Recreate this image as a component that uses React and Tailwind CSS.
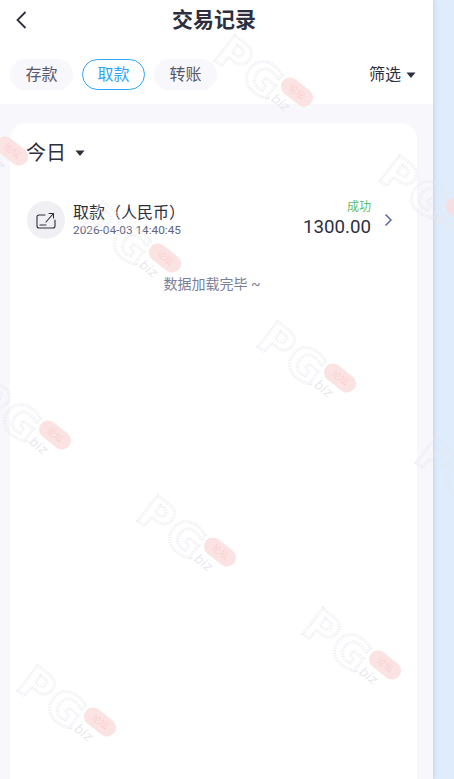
import React from 'react';

// pill centre of each watermark stamp
const marks = [
  { x: 297, y: 92 },
  { x: 12, y: 151 },
  { x: 462, y: 212 },
  { x: 165, y: 258 },
  { x: 340, y: 378 },
  { x: 55, y: 435 },
  { x: 498, y: 494 },
  { x: 220, y: 552 },
  { x: 385, y: 665 },
  { x: 100, y: 722 },
  { x: 190, y: -35 }
];

const Watermark = ({ x, y }) => (
  <svg className="absolute overflow-visible" width="1" height="1" style={{ left: x, top: y }}>
    <g transform="rotate(38)" fontFamily="'DejaVu Sans', sans-serif">
      <text
        x="-88"
        y="26"
        fontSize="44"
        fontWeight="700"
        letterSpacing="2"
        fill="none"
        stroke="#e6e8ee"
        strokeWidth="3"
        strokeDasharray="1 1.500"
        opacity="0.65"
      >
        PG
      </text>
      <rect x="-18" y="-9" width="36" height="18" rx="9" fill="#fbdcdc" opacity="0.8" />
      <text x="-9" y="3" fontSize="9" fill="#f8d0d0" fontFamily="'Noto Sans CJK SC', sans-serif">论坛</text>
      <text x="-20" y="23" fontSize="13" fill="#e8e9ee" fontStyle="italic">.biz</text>
    </g>
  </svg>
);

const Caret = ({ className }) => (
  <svg className={className} viewBox="0 0 10 6" fill="#2d2f3e">
    <path d="M0.5 0.5h9L5.4 5.4a.5.5 0 0 1-.8 0z" />
  </svg>
);

const tabs = [
  { id: 'deposit', label: '存款' },
  { id: 'withdraw', label: '取款', active: true },
  { id: 'transfer', label: '转账' }
];

export default function App() {
  return (
    <div className="relative flex h-[779px] w-[454px] overflow-hidden bg-[#deecfb] font-['Roboto','Noto_Sans_CJK_SC',sans-serif] text-[#2d2f3e]">
      <div className="flex w-[433px] flex-col bg-white shadow-[1px_0_4px_rgba(120,140,180,0.25)]">
        {/* header */}
        <div className="relative flex h-[40px] items-center justify-center pr-[5px]">
          <svg className="absolute left-[14px] top-[10px] h-[20px] w-[14px]" viewBox="0 0 14 20" fill="none" stroke="#2d2f3e" strokeWidth="1.8">
            <path d="M11.5 2 3.5 10l8 8" />
          </svg>
          <h1 className="text-[21px] leading-[28px] font-bold">交易记录</h1>
        </div>

        {/* tabs */}
        <div className="mt-[19px] flex h-[31px] items-center gap-[9px] pl-[10px] pr-[17px]">
          {tabs.map((tab) => (
            <div
              key={tab.id}
              className={
                tab.active
                  ? 'flex h-[31px] w-[63px] items-center justify-center rounded-full border border-[#2fa5f5] text-[16px] text-[#2fa5f5]'
                  : 'flex h-[31px] w-[63px] items-center justify-center rounded-full bg-[#f8f7fc] text-[16px] text-[#55576a]'
              }
            >
              {tab.label}
            </div>
          ))}
          <div className="ml-auto flex items-center gap-[5px] text-[16px]">
            筛选
            <Caret className="h-[6px] w-[10px]" />
          </div>
        </div>

        {/* list */}
        <div className="mt-[14px] flex flex-1 flex-col bg-[#f8f7fc] pl-[10px] pr-[16px] pt-[19px]">
          <div className="flex-1 rounded-t-[16px] bg-white">
            <div className="flex items-center gap-[9px] pl-[16px] pt-[16px]">
              <span className="text-[20px] leading-[28px]">今日</span>
              <Caret className="h-[6px] w-[10px]" />
            </div>

            <div className="mt-[33px] flex items-center pl-[17px] pr-[24px]">
              <div className="flex h-[38px] w-[38px] items-center justify-center rounded-full bg-[#f0f0f4]">
                <svg className="h-[20px] w-[20px]" viewBox="0 0 20 20" fill="none" stroke="#2d2f3e" strokeWidth="1.1" strokeLinecap="round" strokeLinejoin="round">
                  <path d="M9 5H3a2 2 0 0 0-2 2v9a2 2 0 0 0 2 2h14a2 2 0 0 0 2-2v-6" />
                  <path d="M10 12 17 4M13 3.500h4.500V8" />
                  <path d="M4 15h6" />
                </svg>
              </div>
              <div className="ml-[8px] flex flex-col">
                <span className="text-[16px] leading-[20px]">取款（人民币）</span>
                <span className="text-[11.8px] leading-[14px] text-[#5f6380]">2026-04-03 14:40:45</span>
              </div>
              <div className="ml-auto flex flex-col items-end">
                <span className="text-[12px] leading-[14px] text-[#58c06a]">成功</span>
                <span className="text-[18.7px] leading-[26px]">1300.00</span>
              </div>
              <svg className="ml-[13px] h-[14px] w-[9px]" viewBox="0 0 9 14" fill="none" stroke="#5a6a9e" strokeWidth="1.5">
                <path d="M1.500 1.500 7 7l-5.500 5.500" />
              </svg>
            </div>

            <p className="mt-[35px] pr-[3px] text-center text-[14px] leading-[18px] text-[#7a8099]">数据加载完毕 ~</p>
          </div>
        </div>
      </div>

      {/* watermark overlay */}
      <div className="pointer-events-none absolute inset-0">
        {marks.map((m) => (
          <Watermark key={`${m.x}-${m.y}`} x={m.x} y={m.y} />
        ))}
      </div>
    </div>
  );
}
